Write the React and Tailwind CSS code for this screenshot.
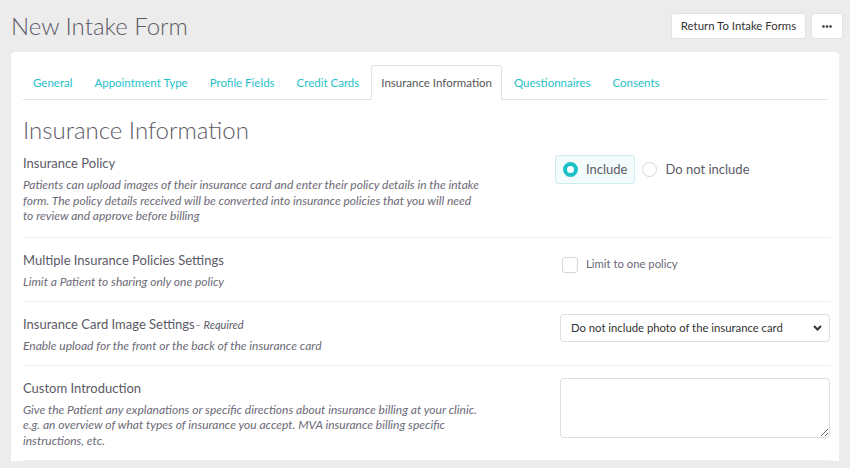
import { useState } from "react";

const tabs = [
  "General",
  "Appointment Type",
  "Profile Fields",
  "Credit Cards",
  "Insurance Information",
  "Questionnaires",
  "Consents",
];

function Row({ title, extra, desc, children, first }) {
  return (
    <div
      className={
        "flex border-b border-[#f0f0f0] " + (first ? "pt-[9px] pb-[13px]" : "pt-[13px] pb-[11px]")
      }
    >
      <div className="w-[537px] shrink-0">
        <div className="h-[18px] text-[13px] leading-[18px] text-[#5b5966]">
          {title}
          {extra && <span className="text-[11px] italic leading-[18px]">{extra}</span>}
        </div>
        <p className="mt-[5px] max-w-[510px] text-[12px] italic leading-[15.7px] text-[#6c6a76]">
          {desc}
        </p>
      </div>
      <div className="flex-1">{children}</div>
    </div>
  );
}

export default function App() {
  const [policy, setPolicy] = useState("include");
  const [limitOne, setLimitOne] = useState(false);

  return (
    <div className="min-h-screen bg-[#ececec] font-['Lato',sans-serif] pl-[11px] pr-[7px]">
      {/* header */}
      <div className="flex items-start justify-between pt-[13px]">
        <h1 className="text-[24px] font-light leading-[26px] text-[#5c5a66]">New Intake Form</h1>
        <div className="flex gap-[5px]">
          <button className="h-[26px] w-[135px] rounded-[3px] border border-[#e2e2e2] bg-white text-[11.4px] text-[#333]">
            Return To Intake Forms
          </button>
          <button className="flex h-[26px] w-[32px] items-center justify-center rounded-[3px] border border-[#e2e2e2] bg-white">
            <svg width="10" height="3" viewBox="0 0 10 3">
              <circle cx="1.5" cy="1.5" r="1.3" fill="#333" />
              <circle cx="5" cy="1.5" r="1.3" fill="#333" />
              <circle cx="8.5" cy="1.5" r="1.3" fill="#333" />
            </svg>
          </button>
        </div>
      </div>

      {/* card */}
      <div className="mt-[13px] mr-[4px] rounded-t-[4px] bg-white pl-[12px] pr-[8px] pt-[13px]">
        <ul className="mr-[4px] flex border-b border-[#e3e3e3]">
          {tabs.map((t) => {
            const active = t === "Insurance Information";
            return (
              <li
                key={t}
                className={
                  "-mb-px mr-[2px] flex h-[35px] items-center rounded-t-[3px] border px-[9px] text-[11.5px] " +
                  (active
                    ? "border-[#e3e3e3] border-b-white bg-white text-[#555]"
                    : "border-transparent text-[#1fc1c9]")
                }
              >
                {t}
              </li>
            );
          })}
        </ul>

        <h2 className="mt-[15px] text-[24px] font-light leading-[30px] text-[#5c5a66]">
          Insurance Information
        </h2>

        <Row
          first
          title="Insurance Policy"
          desc={
            <>
              Patients can upload images of their insurance card and enter their policy details in the intake
              <br />
              form. The policy details received will be converted into insurance policies that you will need
              <br />
              to review and approve before billing
            </>
          }
        >
          <div className="mt-[1px] -ml-[5px] flex items-center">
            <label
              onClick={() => setPolicy("include")}
              className={
                "flex h-[29px] items-center gap-[8px] rounded-[3px] border px-[7px] text-[13px] text-[#5b5966] " +
                (policy === "include" ? "border-[#cdeeef] bg-[#f3fbfb]" : "border-transparent")
              }
            >
              <span
                className={
                  "h-[15px] w-[15px] rounded-full bg-white " +
                  (policy === "include" ? "border-[4px] border-[#1cc0c7]" : "border border-[#d6d6d6]")
                }
              />
              Include
            </label>
            <label
              onClick={() => setPolicy("exclude")}
              className={
                "flex h-[29px] items-center gap-[8px] rounded-[3px] border pl-[6px] text-[13px] text-[#5b5966] " +
                (policy === "exclude" ? "border-[#cdeeef] bg-[#f3fbfb]" : "border-transparent")
              }
            >
              <span
                className={
                  "h-[15px] w-[15px] rounded-full bg-white " +
                  (policy === "exclude" ? "border-[4px] border-[#1cc0c7]" : "border border-[#d6d6d6]")
                }
              />
              Do not include
            </label>
          </div>
        </Row>

        <Row title="Multiple Insurance Policies Settings" desc="Limit a Patient to sharing only one policy">
          <label
            onClick={() => setLimitOne(!limitOne)}
            className="mt-[5px] ml-[2px] flex items-center gap-[8px] text-[11.3px] text-[#6a6875]"
          >
            <span
              className={
                "h-[16px] w-[16px] rounded-[3px] border " +
                (limitOne ? "border-[#1cc0c7] bg-[#1cc0c7]" : "border-[#d6d6d6] bg-white")
              }
            />
            Limit to one policy
          </label>
        </Row>

        <Row
          title="Insurance Card Image Settings"
          extra="– Required"
          desc="Enable upload for the front or the back of the insurance card"
        >
          <div className="relative -mt-px w-[270px]">
            <select className="h-[28px] w-full appearance-none rounded-[4px] border border-[#dedede] bg-white pl-[10px] text-[11.3px] text-[#333] outline-none">
              <option>Do not include photo of the insurance card</option>
              <option>Include front photo of the insurance card</option>
              <option>Include front and back photos of the insurance card</option>
            </select>
            <svg
              className="pointer-events-none absolute right-[8px] top-[11px]"
              width="9"
              height="6"
              viewBox="0 0 9 6"
            >
              <path d="M1 1l3.5 3.5L8 1" fill="none" stroke="#333" strokeWidth="2" />
            </svg>
          </div>
        </Row>

        <Row
          title="Custom Introduction"
          desc={
            <>
              Give the Patient any explanations or specific directions about insurance billing at your clinic.
              <br />
              e.g. an overview of what types of insurance you accept. MVA insurance billing specific
              <br />
              instructions, etc.
            </>
          }
        >
          <textarea className="-mt-px block h-[60px] w-[270px] rounded-[4px] border border-[#dedede] text-[12px] outline-none" />
        </Row>
      </div>
    </div>
  );
}
